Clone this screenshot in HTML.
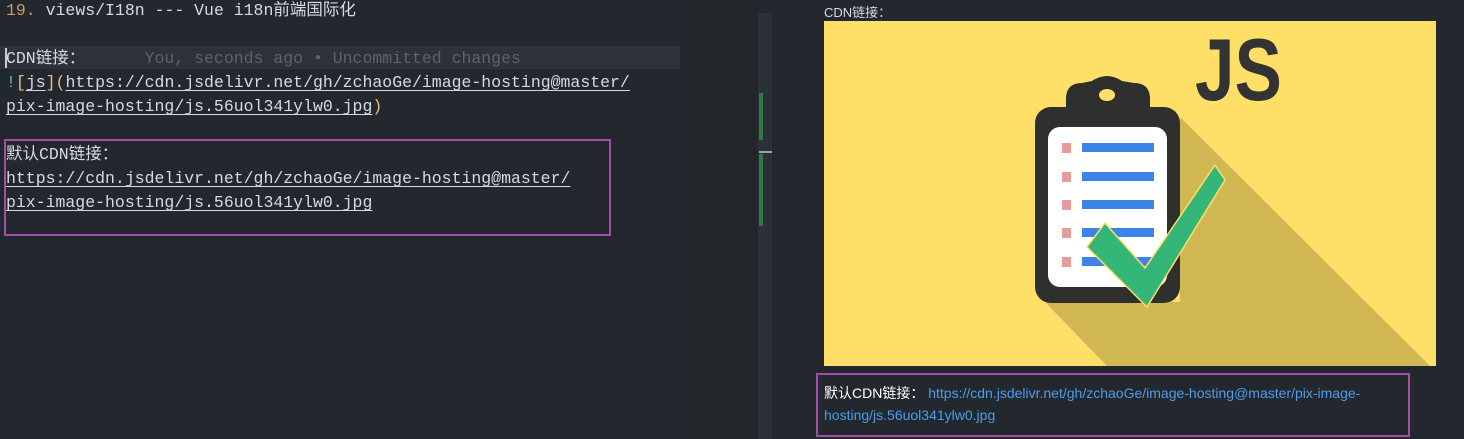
<!DOCTYPE html>
<html><head><meta charset="utf-8"><style>
body{margin:0;width:1464px;height:439px;background:#23272e;position:relative;overflow:hidden;font-family:"Liberation Mono","Noto Sans CJK SC",monospace;}
.l{position:absolute;left:6px;font-size:16.5px;color:#d7dae0;white-space:pre;line-height:24px;}
.u{text-decoration:underline;text-underline-offset:3px;}
.r{position:absolute;font-family:"Liberation Sans","Noto Sans CJK SC",sans-serif;font-size:13px;color:#d7dae0;}
</style></head><body>
<div style="position:absolute;left:0;top:46px;width:680px;height:23px;background:#2c313a"></div>
<div style="position:absolute;left:5px;top:48px;width:2px;height:20px;background:#c8ccd4"></div>
<div class="l" style="top:-1px"><span style="color:#d19a66">19.</span> views/I18n --- Vue i18n前端国际化</div>
<div class="l" style="top:47px">CDN链接：      <span style="color:#5c6370">You, seconds ago • Uncommitted changes</span></div>
<div class="l" style="top:71px"><span style="color:#56b6c2">!</span><span style="color:#e5c07b">[</span><span class="u">js</span><span style="color:#e5c07b">](</span><span class="u">https://cdn.jsdelivr.net/gh/zchaoGe/image-hosting@master/</span></div>
<div class="l" style="top:95px"><span class="u">pix-image-hosting/js.56uol341ylw0.jpg</span><span style="color:#e5c07b">)</span></div>
<div style="position:absolute;left:4px;top:139px;width:603px;height:93px;border:2px solid #a24fa8"></div>
<div class="l" style="top:143px">默认CDN链接：</div>
<div class="l" style="top:167px"><span class="u">https://cdn.jsdelivr.net/gh/zchaoGe/image-hosting@master/</span></div>
<div class="l" style="top:191px"><span class="u">pix-image-hosting/js.56uol341ylw0.jpg</span></div>

<div style="position:absolute;left:680px;top:0;width:78px;height:439px;background:#22262b"></div>
<div style="position:absolute;left:758px;top:13px;width:14px;height:426px;background:#2c3038"></div>
<div style="position:absolute;left:759px;top:93px;width:4px;height:47px;background:#2d7a43"></div>
<div style="position:absolute;left:759px;top:154px;width:4px;height:72px;background:#2d7a43"></div>
<div style="position:absolute;left:759px;top:151px;width:13px;height:2px;background:#9aa4b4"></div>

<div class="r" style="left:824px;top:2px">CDN链接：</div>
<svg style="position:absolute;left:824px;top:21px" width="612" height="345" viewBox="0 0 612 345">
<rect width="612" height="345" fill="#fedf67"/>
<polygon points="356,96 606,345 283,345 221,281 356,281" fill="#d0b752"/>
<rect x="211" y="86" width="145" height="196" rx="16" fill="#2f2f2d"/>
<path d="M242,92 V78 Q242,62 258,62 L268,60 Q283,50 298,60 L310,62 Q326,62 326,78 V92 Z" fill="#2f2f2d"/>
<ellipse cx="283" cy="74" rx="8" ry="6" fill="#fedf67"/>
<rect x="224" y="106" width="119" height="160" rx="12" fill="#fff"/>
<g fill="#e99a9a"><rect x="238" y="122" width="9" height="10"/><rect x="238" y="151" width="9" height="10"/><rect x="238" y="179" width="9" height="10"/><rect x="238" y="207" width="9" height="10"/><rect x="238" y="236" width="9" height="10"/></g>
<g fill="#3d84e8"><rect x="258" y="122" width="72" height="9"/><rect x="258" y="151" width="72" height="9"/><rect x="258" y="179" width="72" height="9"/><rect x="258" y="207" width="72" height="9"/><rect x="258" y="236" width="72" height="9"/></g>
<polygon points="263,226 281,202 321,247 391,144 401,159 323,286" fill="#33b677" stroke="#fedf67" stroke-width="1.5"/>
<text x="371" y="79" font-family="Liberation Sans" font-weight="bold" font-size="88" fill="#333" textLength="87" lengthAdjust="spacingAndGlyphs">JS</text>
</svg>
<div style="position:absolute;left:816px;top:373px;width:590px;height:60px;border:2px solid #a24fa8"></div>
<div class="r" style="left:824px;top:382px;line-height:22px;width:580px;font-size:14px"><b style="color:#fff;font-weight:normal">默认CDN链接：</b>&nbsp;<span style="color:#4d9de8">https://cdn.jsdelivr.net/gh/zchaoGe/image-hosting@master/pix-image-<br>hosting/js.56uol341ylw0.jpg</span></div>
</body></html>
